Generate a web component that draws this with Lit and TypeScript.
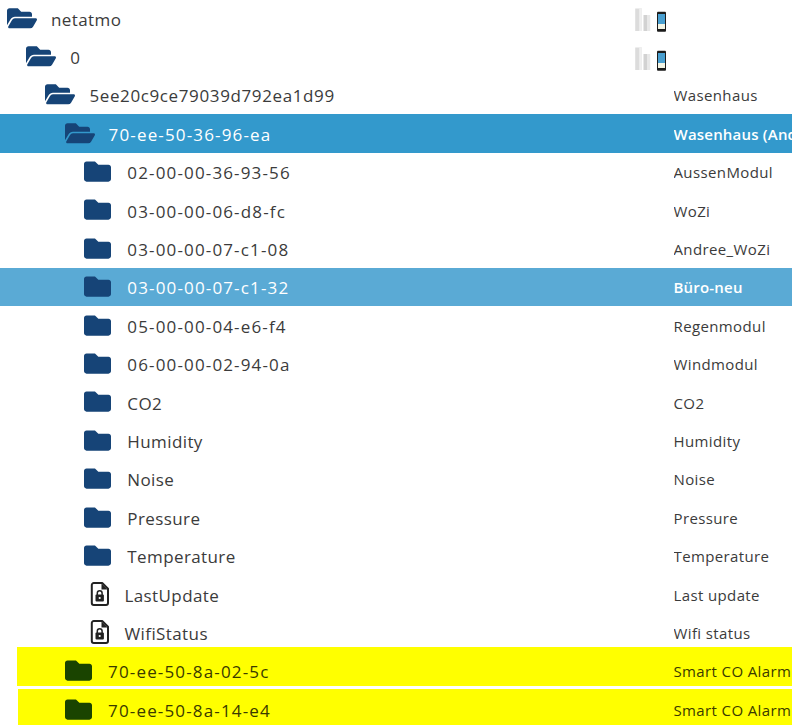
import { LitElement, html, css, svg } from "lit";
import { customElement } from "lit/decorators.js";

type Row = { name: string; label: string; level: number; icon: "open" | "folder" | "file"; cls?: string; devices?: boolean };

const rows: Row[] = [
  { name: "netatmo", label: "", level: 0, icon: "open", devices: true },
  { name: "0", label: "", level: 1, icon: "open", devices: true },
  { name: "5ee20c9ce79039d792ea1d99", label: "Wasenhaus", level: 2, icon: "open" },
  { name: "70-ee-50-36-96-ea", label: "Wasenhaus (Andree)", level: 3, icon: "open", cls: "sel" },
  { name: "02-00-00-36-93-56", label: "AussenModul", level: 4, icon: "folder" },
  { name: "03-00-00-06-d8-fc", label: "WoZi", level: 4, icon: "folder" },
  { name: "03-00-00-07-c1-08", label: "Andree_WoZi", level: 4, icon: "folder" },
  { name: "03-00-00-07-c1-32", label: "Büro-neu", level: 4, icon: "folder", cls: "hover" },
  { name: "05-00-00-04-e6-f4", label: "Regenmodul", level: 4, icon: "folder" },
  { name: "06-00-00-02-94-0a", label: "Windmodul", level: 4, icon: "folder" },
  { name: "CO2", label: "CO2", level: 4, icon: "folder" },
  { name: "Humidity", label: "Humidity", level: 4, icon: "folder" },
  { name: "Noise", label: "Noise", level: 4, icon: "folder" },
  { name: "Pressure", label: "Pressure", level: 4, icon: "folder" },
  { name: "Temperature", label: "Temperature", level: 4, icon: "folder" },
  { name: "LastUpdate", label: "Last update", level: 4, icon: "file" },
  { name: "WifiStatus", label: "Wifi status", level: 4, icon: "file" },
  { name: "70-ee-50-8a-02-5c", label: "Smart CO Alarm", level: 3, icon: "folder", cls: "mark a" },
  { name: "70-ee-50-8a-14-e4", label: "Smart CO Alarm", level: 3, icon: "folder", cls: "mark b" },
];

const openIcon = svg`<path d="M572.694 292.093L500.27 416.248A63.997 63.997 0 0 1 444.989 448H45.025c-18.523 0-30.064-20.093-20.731-36.093l72.424-124.155A64 64 0 0 1 152 256h399.964c18.523 0 30.064 20.093 20.73 36.093zM152 224h328v-48c0-26.51-21.49-48-48-48H272l-64-64H48C21.49 64 0 85.49 0 112v278.046l69.077-118.418C86.214 242.25 117.989 224 152 224z"/>`;
const folderIcon = svg`<path d="M464 128H272l-64-64H48C21.49 64 0 85.49 0 112v288c0 26.51 21.49 48 48 48h416c26.51 0 48-21.49 48-48V176c0-26.51-21.49-48-48-48z"/>`;

const nameKind = (n: string) => (/^[0-9a-f]{24}$/.test(n) ? "hash" : n.includes("-") ? "id" : "plain");

@customElement("app-root")
export class AppRoot extends LitElement {
  static styles = css`
    :host {
      display: block;
      width: 792px;
      height: 727px;
      overflow: hidden;
      background: #fff;
      font-family: "Open Sans", "Noto Sans", sans-serif;
      color: #3b3b3b;
    }
    .row {
      position: relative;
      display: grid;
      grid-template-columns: 673.5px 1fr;
      align-items: center;
      height: 38.4px;
      white-space: nowrap;
    }
    .row.sel, .row.hover { color: #fff; }
    .row.mark { color: #3a3a00; }
    .row.sel::before, .row.hover::before, .row.mark::before {
      content: "";
      position: absolute;
      right: 0;
    }
    .row.sel::before { left: 0; top: -1px; height: 39px; background: #3399cc; }
    .row.hover::before { left: 0; top: -1px; height: 38.4px; background: #5aaad5; }
    .row.mark::before { background: #ffff00; }
    .row.a::before { left: 17px; top: -5.8px; height: 38.8px; }
    .row.b::before { left: 18px; top: -2.2px; height: 36.2px; }
    .name {
      position: relative;
      display: flex;
      align-items: center;
      font-size: 17px;
      min-width: 0;
    }
    .plain { letter-spacing: 0.4px; }
    .hash { letter-spacing: 0.62px; }
    .id { letter-spacing: 1.15px; }
    .lvl0 { padding-left: 7px; }
    .lvl1 { padding-left: 26.2px; }
    .lvl2 { padding-left: 45.4px; }
    .lvl3 { padding-left: 64.6px; }
    .lvl4 { padding-left: 83.8px; }
    .ico {
      flex: none;
      fill: #164477;
      margin-bottom: 2.4px;
    }
    .row.mark .ico { fill: #1a4400; }
    .open { width: 30px; height: 26.7px; margin-right: 14px; }
    .folder { width: 27px; height: 27px; margin-right: 16.5px; }
    .file {
      flex: none;
      width: 19px;
      height: 24px;
      margin-left: 6.7px;
      margin-right: 15px;
      margin-bottom: 2px;
    }
    .label {
      position: relative;
      font-size: 15px;
      letter-spacing: 0.38px;
      overflow: hidden;
      margin-top: -1px;
    }
    .sel .label, .hover .label { font-weight: 600; letter-spacing: 0.2px; }
    .devices {
      position: relative;
      display: block;
      width: 36px;
      height: 26px;
      margin-left: -40px;
    }
  `;

  private icon(r: Row) {
    if (r.icon === "open") {
      return html`<svg class="ico open" viewBox="0 0 576 512">${openIcon}</svg>`;
    }
    if (r.icon === "folder") {
      return html`<svg class="ico folder" viewBox="0 0 512 512">${folderIcon}</svg>`;
    }
    return html`<svg class="file" viewBox="0 0 19 24">
      <path d="M3.8 1h8.4l5.8 5.8V21a2 2 0 0 1-2 2H3.8a2 2 0 0 1-2-2V3a2 2 0 0 1 2-2z" fill="#fff" stroke="#222" stroke-width="2" stroke-linejoin="round"/>
      <path d="M11.5 1.5v6h6z" fill="#222"/>
      <path d="M7.3 13v-1.9a2.4 2.4 0 0 1 4.8 0V13" fill="none" stroke="#222" stroke-width="1.5"/>
      <rect x="5.5" y="12.5" width="8.4" height="7" rx="1" fill="#222"/>
      <circle cx="9.7" cy="16" r="1.1" fill="#fff"/>
    </svg>`;
  }

  private devices() {
    return html`<svg class="devices" viewBox="0 0 36 26">
      <defs>
        <filter id="soft" x="-10%" y="-10%" width="120%" height="120%"><feGaussianBlur stdDeviation="0.45"/></filter>
      </defs>
      <g filter="url(#soft)">
        <rect x="1.2" y="2.5" width="6.6" height="22.5" fill="#dcdcdc"/>
        <rect x="5.2" y="2.5" width="2.6" height="22.5" fill="#f0f0f0"/>
        <rect x="9.5" y="9" width="6.6" height="16" fill="#d2d2d2"/>
        <rect x="13" y="9" width="3.1" height="16" fill="#e8e8e8"/>
        <rect x="23" y="5.8" width="9" height="20" rx="1" fill="#1c1c1c"/>
        <rect x="24" y="8" width="7" height="10" fill="#4a9fd0"/>
        <rect x="24" y="18" width="7" height="5" fill="#f2f4e4"/>
      </g>
    </svg>`;
  }

  render() {
    return html`${rows.map(
      (r) => html`<div class="row ${r.cls ?? ""}">
        <div class="name lvl${r.level}">${this.icon(r)}<span class=${nameKind(r.name)}>${r.name}</span></div>
        ${r.devices ? this.devices() : html`<div class="label">${r.label}</div>`}
      </div>`
    )}`;
  }
}
